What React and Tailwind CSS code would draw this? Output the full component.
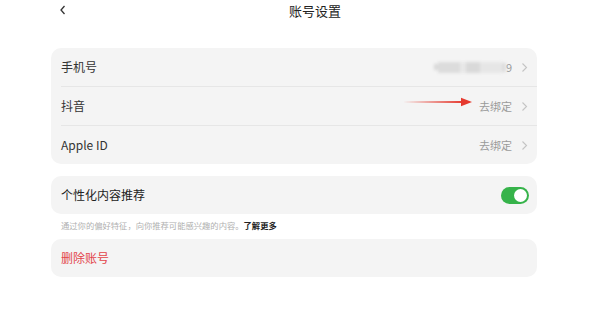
import React from 'react';

const font = { fontFamily: '"Noto Sans CJK SC", "Noto Sans", sans-serif' };

const Chevron = () => (
    <svg width="7" height="11" viewBox="0 0 7 11" className="ml-[9px]">
        <path d="M1.5 1.5 L5.5 5.5 L1.5 9.5" fill="none" stroke="#c4c4c4" strokeWidth="1.1" />
    </svg>
);

const Row = ({ label, children, last }) => (
    <div className={`${last ? 'h-[38px]' : 'h-[39px] border-b border-[#e6e6e6]'} flex items-center justify-between pr-[9px] ml-[10px]`}>
        <span className="text-[12px] text-[#333]">{label}</span>
        <div className="flex items-center">{children}</div>
    </div>
);

export default function App() {
    return (
        <div className="w-[600px] h-[332px] bg-white relative overflow-hidden" style={font}>
            {/* header */}
            <div className="h-[22px] flex items-center relative">
                <svg width="8" height="10" viewBox="0 0 8 10" className="absolute left-[59px] top-[5px]">
                    <path d="M5.5 1 L2 5 L5.5 9" fill="none" stroke="#333" strokeWidth="1.3" />
                </svg>
                <span className="absolute left-[289px] top-[1px] text-[13px] text-[#222]">账号设置</span>
            </div>

            <div className="ml-[51px] w-[486px] mt-[26px] flex flex-col">
                {/* accounts card */}
                <div className="bg-[#f4f4f4] rounded-[10px] flex flex-col">
                    <Row label="手机号">
                        <div className="flex items-center">
                            <div className="flex items-center blur-[1.5px]">
                                <div className="w-[4px] h-[6px] bg-[#d8d8d8]" />
                                <div className="w-[22px] h-[11px] bg-[#dcdcdc]" />
                                <div className="w-[6px] h-[11px] bg-[#e8e8e8]" />
                                <div className="w-[14px] h-[11px] bg-[#d9d9d9]" />
                                <div className="w-[22px] h-[11px] bg-[#e6e6e6]" />
                                <div className="w-[4px] h-[9px] bg-[#dddddd]" />
                            </div>
                            <span className="text-[11px] text-[#999]">9</span>
                        </div>
                        <Chevron />
                    </Row>
                    <Row label="抖音">
                        <div className="relative flex items-center">
                            <svg width="70" height="12" viewBox="0 0 70 12" className="absolute right-[39px] top-[-2px]">
                                <path d="M0 6 L60 5 L60 7 Z" fill="#e53a2f" />
                                <path d="M58 1.8 L69 6 L58 10.2 Z" fill="#e53a2f" />
                            </svg>
                            <span className="text-[11px] text-[#9a9a9a]">去绑定</span>
                        </div>
                        <Chevron />
                    </Row>
                    <Row label="Apple ID" last>
                        <span className="text-[11px] text-[#9a9a9a]">去绑定</span>
                        <Chevron />
                    </Row>
                </div>

                {/* personalization */}
                <div className="bg-[#f4f4f4] rounded-[10px] mt-[12px] h-[38px] flex items-center justify-between pl-[10px] pr-[8px]">
                    <span className="text-[12px] text-[#222]">个性化内容推荐</span>
                    <div className="w-[28px] h-[17px] rounded-full bg-[#36b34a] flex items-center justify-end pr-[2px]">
                        <div className="w-[13px] h-[13px] rounded-full bg-white" />
                    </div>
                </div>
                <div className="ml-[10px] mt-[3px] h-[16px] flex items-center text-[8.3px] text-[#b0b0b0]">
                    通过你的偏好特征，向你推荐可能感兴趣的内容。
                    <span className="text-[#222] font-bold">了解更多</span>
                </div>

                {/* delete */}
                <div className="bg-[#f4f4f4] rounded-[10px] mt-[6px] h-[38px] flex items-center pl-[10px]">
                    <span className="text-[12px] text-[#e3444a]">删除账号</span>
                </div>
            </div>
        </div>
    );
}
